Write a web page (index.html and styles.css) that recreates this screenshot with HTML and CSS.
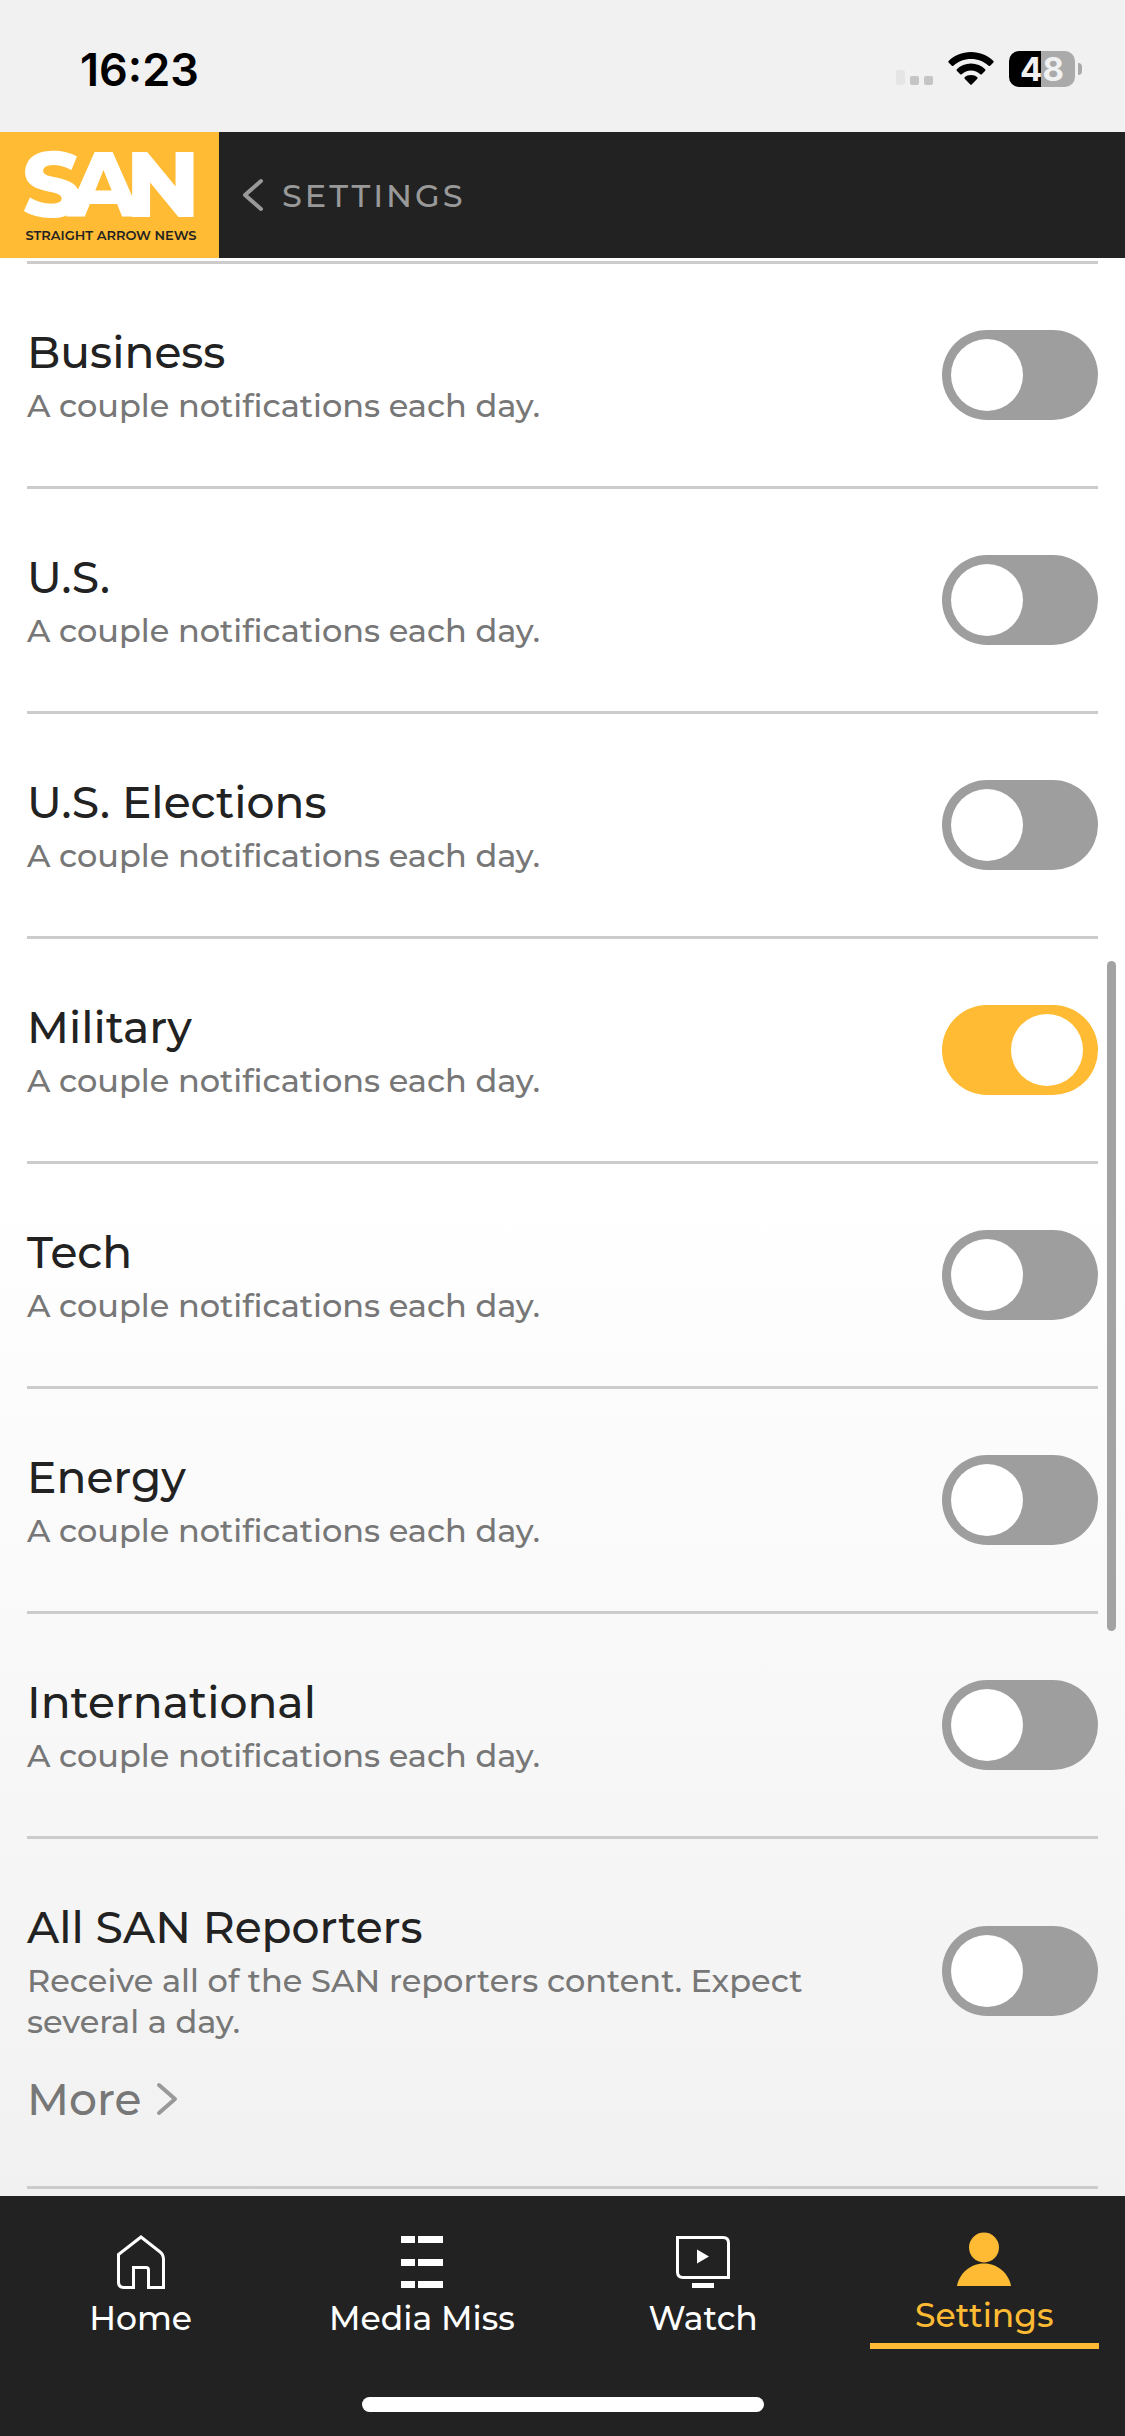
FILE: index.html
```html
<!doctype html>
<html lang="en">
  <head>
    <meta charset="UTF-8" />
    <meta name="viewport" content="width=device-width, initial-scale=1.0" />
    <title>Settings - Straight Arrow News</title>
    <link rel="stylesheet" href="styles.css">
  </head>
  <body>
    <div class="status-bar">
      <span class="time">16:23</span>
      <div class="status-icons">
        <svg class="signal" width="37" height="34" viewBox="0 0 37 34">
          <rect x="0" y="18" width="9" height="15" rx="2" fill="#e5e5e5" />
          <rect x="14" y="24" width="9" height="9" rx="2" fill="#c5c5c5" />
          <rect x="28" y="24" width="9" height="9" rx="2" fill="#c5c5c5" />
        </svg>
        <svg class="wifi" width="46" height="34" viewBox="0 0 46 34">
          <path d="M23 0C14 0 6 3.500 0.600 9Q0 9.800 0.600 10.600L3.800 13.800Q4.600 14.400 5.400 13.800C10 9.500 16 7 23 7S36 9.500 40.600 13.800Q41.400 14.400 42.200 13.800L45.400 10.600Q46 9.800 45.400 9C40 3.500 32 0 23 0Z" />
          <path d="M23 11.500C17.500 11.500 12.500 13.700 8.800 17.300Q8.200 18 8.800 18.800L12.200 22.200Q13 22.800 13.700 22.200C16.200 19.900 19.400 18.500 23 18.500S29.800 19.900 32.300 22.200Q33 22.800 33.800 22.200L37.200 18.800Q37.800 18 37.200 17.300C33.500 13.700 28.500 11.500 23 11.500Z" />
          <path d="M23 23C20.500 23 18.300 23.900 16.700 25.300Q16 26.100 16.700 26.800L22.300 32.500Q23 33.100 23.700 32.500L29.300 26.800Q30 26.100 29.300 25.300C27.700 23.900 25.500 23 23 23Z" />
        </svg>
        <div class="battery"><span class="battery-level">48</span></div>
      </div>
    </div>

    <header class="header">
      <a class="logo" href="#">
        <span class="logo-name">SAN</span>
        <span class="logo-tagline">STRAIGHT ARROW NEWS</span>
      </a>
      <button class="back" type="button">
        <svg width="22" height="34" viewBox="0 0 22 34"><path d="M19 3L3 17L19 31" /></svg>
        SETTINGS
      </button>
    </header>

    <main class="content">
      <ul class="topics">
        <li class="topic">
          <div class="topic-row">
            <label class="topic-text" for="business">
              <span class="topic-title">Business</span>
              <span class="topic-note">A couple notifications each day.</span>
            </label>
            <input class="toggle" type="checkbox" id="business" />
          </div>
        </li>
        <li class="topic">
          <div class="topic-row">
            <label class="topic-text" for="us">
              <span class="topic-title">U.S.</span>
              <span class="topic-note">A couple notifications each day.</span>
            </label>
            <input class="toggle" type="checkbox" id="us" />
          </div>
        </li>
        <li class="topic">
          <div class="topic-row">
            <label class="topic-text" for="elections">
              <span class="topic-title">U.S. Elections</span>
              <span class="topic-note">A couple notifications each day.</span>
            </label>
            <input class="toggle" type="checkbox" id="elections" />
          </div>
        </li>
        <li class="topic">
          <div class="topic-row">
            <label class="topic-text" for="military">
              <span class="topic-title">Military</span>
              <span class="topic-note">A couple notifications each day.</span>
            </label>
            <input class="toggle" type="checkbox" id="military" checked />
          </div>
        </li>
        <li class="topic">
          <div class="topic-row">
            <label class="topic-text" for="tech">
              <span class="topic-title">Tech</span>
              <span class="topic-note">A couple notifications each day.</span>
            </label>
            <input class="toggle" type="checkbox" id="tech" />
          </div>
        </li>
        <li class="topic">
          <div class="topic-row">
            <label class="topic-text" for="energy">
              <span class="topic-title">Energy</span>
              <span class="topic-note">A couple notifications each day.</span>
            </label>
            <input class="toggle" type="checkbox" id="energy" />
          </div>
        </li>
        <li class="topic">
          <div class="topic-row">
            <label class="topic-text" for="international">
              <span class="topic-title">International</span>
              <span class="topic-note">A couple notifications each day.</span>
            </label>
            <input class="toggle" type="checkbox" id="international" />
          </div>
        </li>
        <li class="topic">
          <div class="topic-row">
            <label class="topic-text" for="reporters">
              <span class="topic-title">All SAN Reporters</span>
              <span class="topic-note">Receive all of the SAN reporters content. Expect several a day.</span>
            </label>
            <input class="toggle" type="checkbox" id="reporters" />
          </div>
          <a class="more" href="#">
            More
            <svg width="22" height="34" viewBox="0 0 22 34"><path d="M3 3L19 17L3 31" /></svg>
          </a>
        </li>
      </ul>
      <div class="scrollbar"></div>
    </main>

    <nav class="tabs">
      <div class="tab-list">
        <a class="tab" href="#">
          <svg width="54" height="54" viewBox="0 0 54 54">
            <path class="line" d="M27 2L45.500 16.500Q49.500 19.500 49.500 24V52.500H34.500V35Q34.500 32.500 32 32.500H19.500V52.500H10Q4.500 52.500 4.500 47V19.500Z" />
          </svg>
          <span>Home</span>
        </a>
        <a class="tab" href="#">
          <svg width="54" height="54" viewBox="0 0 54 54">
            <path d="M6 1h14v7H6zM23 1h25v7H23zM6 24h14v7H6zM23 24h25v7H23zM6 46h14v7H6zM23 46h25v7H23z" />
          </svg>
          <span>Media Miss</span>
        </a>
        <a class="tab" href="#">
          <svg width="54" height="54" viewBox="0 0 54 54">
            <path class="line" d="M1.500 2.500H47Q52.500 2.500 52.500 8V42.500H7Q1.500 42.500 1.500 37Z" />
            <path d="M21 14.500L33 21.500L21 28.500ZM16 48h22v5H16z" />
          </svg>
          <span>Watch</span>
        </a>
        <a class="tab tab-active" href="#" aria-current="page">
          <svg width="54" height="54" viewBox="0 0 54 54">
            <ellipse cx="27" cy="15.500" rx="15" ry="15" />
            <path d="M0 54C2 42 13 31.500 27 31.500S52 42 54 54Z" />
          </svg>
          <span>Settings</span>
        </a>
      </div>
      <div class="home-indicator"></div>
    </nav>
  </body>
</html>
```

FILE: styles.css
```css
* {
  box-sizing: border-box;
}
body {
  margin: 0;
  min-height: 100vh;
  display: flex;
  flex-direction: column;
  font-family: Montserrat, Inter, "Liberation Sans", sans-serif;
  font-weight: 500;
  color: #222;
  background: #fff;
}
a {
  color: inherit;
  text-decoration: none;
}

/* status bar */
.status-bar {
  display: flex;
  justify-content: space-between;
  align-items: center;
  height: 132px;
  padding: 6px 43px 0 80px;
  background: #f1f1f1;
  font-family: Inter, "Liberation Sans", sans-serif;
  color: #000;
}
.time {
  font-size: 45px;
  font-weight: 600;
}
.status-icons {
  display: flex;
  align-items: center;
  gap: 15px;
}
.battery {
  position: relative;
  display: flex;
  align-items: center;
  justify-content: center;
  width: 66px;
  height: 36px;
  margin-right: 7px;
  border-radius: 10px;
  background: linear-gradient(to right, #000 48%, #aaa 48%);
}
.battery::after {
  content: "";
  position: absolute;
  right: -7px;
  width: 4px;
  height: 12px;
  border-radius: 0 4px 4px 0;
  background: #aaa;
}
.battery-level {
  font-size: 33px;
  font-weight: 700;
  line-height: 36px;
  color: #f1f1f1;
}

/* header */
.header {
  display: flex;
  height: 126px;
  background: #222;
}
.logo {
  display: flex;
  flex-direction: column;
  align-items: center;
  width: 219px;
  padding: 14px 0 0 3px;
  background: #fb3;
}
.logo-name {
  padding-right: 14px;
  font-size: 92px;
  font-weight: 800;
  line-height: 76px;
  letter-spacing: -14px;
  color: #fff;
}
.logo-tagline {
  font-size: 13px;
  font-weight: 600;
  line-height: 26px;
}
.back {
  display: flex;
  align-items: center;
  gap: 18px;
  padding: 0 23px;
  border: 0;
  background: none;
  font: inherit;
  font-size: 32px;
  letter-spacing: 3px;
  color: #999;
}
.back path,
.more path {
  fill: none;
  stroke: #999;
  stroke-width: 4;
  stroke-linecap: round;
  stroke-linejoin: round;
}

/* notification topics */
.content {
  position: relative;
  flex: 1;
  padding: 3px 27px 7px;
  background: linear-gradient(#fff 48%, #f1f1f1);
}
.topics {
  margin: 0;
  padding: 0;
  list-style: none;
  border-bottom: 3px solid #ccc;
}
.topic {
  padding: 60px 0;
  border-top: 3px solid #ccc;
}
.topic-row {
  display: flex;
  align-items: center;
  gap: 80px;
}
.topic-text {
  display: flex;
  flex: 1;
  flex-direction: column;
  gap: 4px;
}
.topic-title {
  font-size: 44px;
  line-height: 57px;
}
.topic-note {
  font-size: 32px;
  line-height: 41px;
  color: #777;
}
.toggle {
  appearance: none;
  flex: none;
  width: 156px;
  height: 90px;
  margin: 0;
  padding: 9px;
  border-radius: 45px;
  background: #9e9e9e;
}
.toggle::before {
  content: "";
  display: block;
  width: 72px;
  height: 72px;
  border-radius: 50%;
  background: #fff;
}
.toggle:checked {
  padding-right: 15px;
  background: #fb3;
}
.toggle:checked::before {
  margin-left: auto;
}
.more {
  display: flex;
  align-items: center;
  gap: 15px;
  margin-top: 30px;
  font-size: 44px;
  line-height: 54px;
  color: #777;
}
.scrollbar {
  position: absolute;
  top: 703px;
  right: 9px;
  width: 9px;
  height: 670px;
  border-radius: 5px;
  background: #a3a3a3;
}

/* bottom tabs */
.tabs {
  height: 240px;
  padding-top: 39px;
  background: #222;
  color: #fff;
}
.tab-list {
  display: grid;
  grid-template-columns: repeat(4, 1fr);
  height: 162px;
}
.tab {
  display: flex;
  flex-direction: column;
  align-items: center;
  gap: 9px;
  font-size: 33px;
  line-height: 40px;
}
.tab svg {
  fill: currentColor;
}
.tab .line {
  fill: none;
  stroke: currentColor;
  stroke-width: 3;
}
.tab-active {
  align-self: start;
  margin: -3px 26px 0;
  padding-bottom: 8px;
  border-bottom: 6px solid #fb3;
  color: #fb3;
}
.home-indicator {
  width: 402px;
  height: 15px;
  margin: 0 auto;
  border-radius: 8px;
  background: #fff;
}
```
